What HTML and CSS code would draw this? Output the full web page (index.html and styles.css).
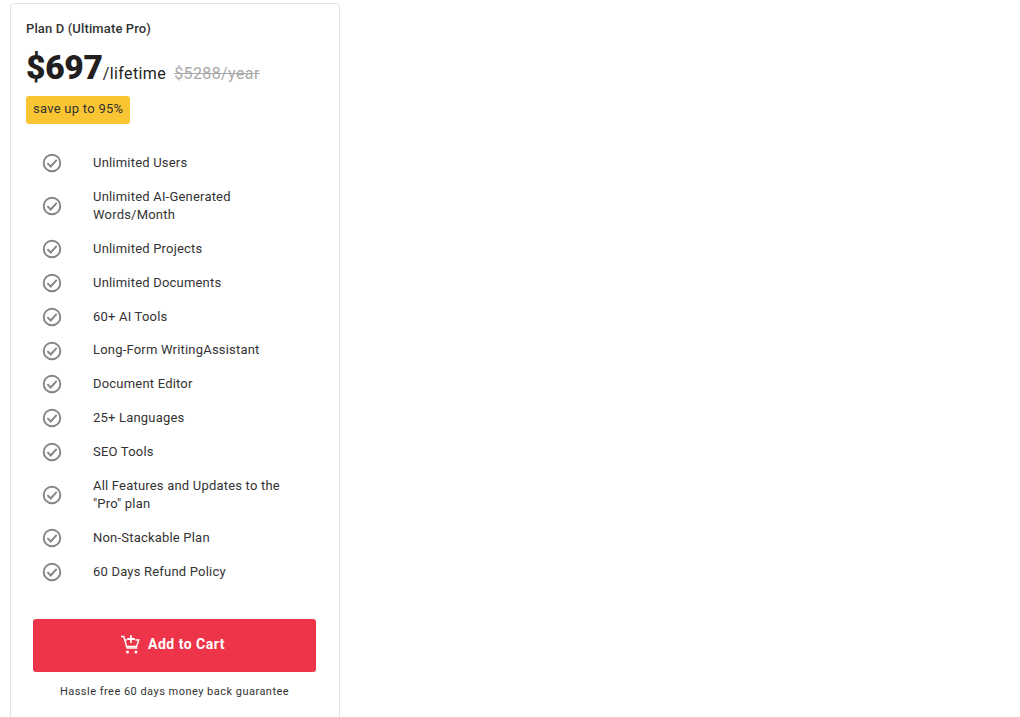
FILE: index.html
```html
<!DOCTYPE html>
<html lang="en">

<head>
  <meta charset="UTF-8">
  <meta name="viewport" content="width=device-width, initial-scale=1.0">
  <title>Plan D</title>
  <link rel="stylesheet" href="styles.css">
</head>

<body>
  <div class="plan-card">
    <h2 class="plan-name">Plan D (Ultimate Pro)</h2>
    <div class="price-row">
      <span class="price">$697</span>
      <span class="period">/lifetime</span>
      <span class="old-price">$5288/year</span>
    </div>
    <span class="save-badge">save up to 95%</span>

    <ul class="features">
      <li><svg class="check" viewBox="0 0 20 20"><circle cx="10" cy="10" r="8.3"/><path d="M5.4 10.2l3.3 3.3 6-6.6"/></svg><span>Unlimited Users</span></li>
      <li><svg class="check" viewBox="0 0 20 20"><circle cx="10" cy="10" r="8.3"/><path d="M5.4 10.2l3.3 3.3 6-6.6"/></svg><span>Unlimited AI-Generated Words/Month</span></li>
      <li><svg class="check" viewBox="0 0 20 20"><circle cx="10" cy="10" r="8.3"/><path d="M5.4 10.2l3.3 3.3 6-6.6"/></svg><span>Unlimited Projects</span></li>
      <li><svg class="check" viewBox="0 0 20 20"><circle cx="10" cy="10" r="8.3"/><path d="M5.4 10.2l3.3 3.3 6-6.6"/></svg><span>Unlimited Documents</span></li>
      <li><svg class="check" viewBox="0 0 20 20"><circle cx="10" cy="10" r="8.3"/><path d="M5.4 10.2l3.3 3.3 6-6.6"/></svg><span>60+ AI Tools</span></li>
      <li><svg class="check" viewBox="0 0 20 20"><circle cx="10" cy="10" r="8.3"/><path d="M5.4 10.2l3.3 3.3 6-6.6"/></svg><span>Long-Form WritingAssistant</span></li>
      <li><svg class="check" viewBox="0 0 20 20"><circle cx="10" cy="10" r="8.3"/><path d="M5.4 10.2l3.3 3.3 6-6.6"/></svg><span>Document Editor</span></li>
      <li><svg class="check" viewBox="0 0 20 20"><circle cx="10" cy="10" r="8.3"/><path d="M5.4 10.2l3.3 3.3 6-6.6"/></svg><span>25+ Languages</span></li>
      <li><svg class="check" viewBox="0 0 20 20"><circle cx="10" cy="10" r="8.3"/><path d="M5.4 10.2l3.3 3.3 6-6.6"/></svg><span>SEO Tools</span></li>
      <li><svg class="check" viewBox="0 0 20 20"><circle cx="10" cy="10" r="8.3"/><path d="M5.4 10.2l3.3 3.3 6-6.6"/></svg><span>All Features and Updates to the "Pro" plan</span></li>
      <li><svg class="check" viewBox="0 0 20 20"><circle cx="10" cy="10" r="8.3"/><path d="M5.4 10.2l3.3 3.3 6-6.6"/></svg><span>Non-Stackable Plan</span></li>
      <li><svg class="check" viewBox="0 0 20 20"><circle cx="10" cy="10" r="8.3"/><path d="M5.4 10.2l3.3 3.3 6-6.6"/></svg><span>60 Days Refund Policy</span></li>
    </ul>

    <button class="cart-btn" type="button">
      <svg class="cart-icon" viewBox="0 0 20 20">
        <path d="M1 2.5h2.8L7 14h10.5"/>
        <path d="M4.8 6h2M15.4 6h3.4l-2.3 6.5H6.5"/>
        <path class="plus" d="M11 1.2v7.6M7.2 5h7.6"/>
        <circle class="wheel" cx="7.5" cy="18" r="1.5"/>
        <circle class="wheel" cx="16" cy="18" r="1.5"/>
      </svg>
      Add to Cart
    </button>
    <p class="guarantee">Hassle free 60 days money back guarantee</p>
  </div>
</body>

</html>
```

FILE: styles.css
```css
html, body {
  height: 717px;
  overflow: hidden;
}

body {
  font-family: Roboto, Arial, sans-serif;
  margin: 0;
  padding: 3px 0 0 10px;
  background-color: #fff;
  color: #333;
}

.plan-card {
  box-sizing: border-box;
  width: 330px;
  height: 730px;
  padding: 16px 15px 0;
  border: 1px solid #e3e3e3;
  border-radius: 4px;
}

.plan-name {
  margin: 0;
  font-size: 13px;
  line-height: 18px;
  font-weight: 500;
  letter-spacing: 0.13px;
  color: #333;
}

.price-row {
  display: flex;
  align-items: baseline;
  margin-top: 10px;
  height: 40px;
}

.price {
  font-size: 33.6px;
  line-height: 40px;
  font-weight: 900;
  letter-spacing: -0.3px;
  color: #231f20;
}

.period {
  font-size: 16px;
  letter-spacing: 0.4px;
  color: #231f20;
}

.old-price {
  margin-left: 8px;
  font-size: 16px;
  letter-spacing: 0.4px;
  color: #aaa;
  text-decoration: line-through;
}

.save-badge {
  display: block;
  width: fit-content;
  margin-top: 8px;
  padding: 0 7px 2px;
  font-size: 13px;
  line-height: 26px;
  letter-spacing: 0.27px;
  color: #333;
  background-color: #f9c532;
  border-radius: 3px;
}

.features {
  list-style: none;
  margin: 22.3px 0 0;
  padding: 0;
}

.features li {
  display: flex;
  align-items: center;
  min-height: 33.8px;
  font-size: 13px;
  line-height: 18.5px;
  letter-spacing: 0.2px;
  color: #333;
  padding-left: 16px;
}

.features li span {
  width: 205px;
  margin-left: 31px;
  padding: 7.65px 0;
}

.check {
  flex: none;
  width: 20px;
  height: 20px;
  fill: none;
  stroke: #858585;
  stroke-width: 1.9;
}

.cart-btn {
  display: flex;
  align-items: center;
  justify-content: center;
  width: 283px;
  height: 53px;
  margin: 30px 0 0 7px;
  padding: 0 4px 2px 0;
  border: none;
  border-radius: 3px;
  background-color: #ee3448;
  color: #fff;
  font-family: inherit;
  font-size: 14px;
  font-weight: 700;
  letter-spacing: 0.5px;
  cursor: pointer;
}

.cart-icon {
  width: 20px;
  height: 20px;
  margin-right: 8px;
  fill: none;
  stroke: #fff;
  stroke-width: 1.4;
}

.cart-icon .plus {
  stroke-width: 1.8;
}

.cart-icon .wheel {
  fill: #fff;
  stroke: none;
}

.guarantee {
  margin: 12px 0 0 7px;
  width: 283px;
  text-align: center;
  font-size: 11px;
  line-height: 16px;
  letter-spacing: 0.48px;
  color: #333;
}
```
